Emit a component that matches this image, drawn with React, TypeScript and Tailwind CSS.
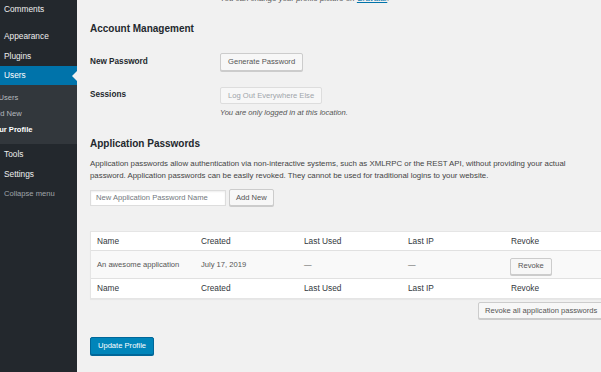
import React from "react";

const menuTop = ["Comments"];
const menuMid = ["Appearance", "Plugins"];
const menuBottom = ["Tools", "Settings"];

function Sidebar() {
  return (
    <div className="flex w-[77px] shrink-0 flex-col bg-[#23282d] text-[8.3px] text-[#eeeeee]">
      {menuTop.map((m) => (
        <div key={m} className="-mt-px flex h-5 items-center pl-[4px]">
          {m}
        </div>
      ))}
      <div className="h-[7px]" />
      {menuMid.map((m) => (
        <div key={m} className="flex h-5 items-center pl-[4px]">
          {m}
        </div>
      ))}
      <div className="relative flex h-[19px] items-center bg-[#0073aa] pl-[4px] text-white">
        Users
        <span className="absolute right-0 top-1/2 h-0 w-0 -translate-y-1/2 border-y-[5px] border-r-[5px] border-y-transparent border-r-[#f1f1f1]" />
      </div>
      <div className="overflow-hidden bg-[#32373c] pb-[6px] pt-[5px] text-[7.6px] text-[#b4b9be]">
        <div className="flex h-4 items-center whitespace-nowrap">
          <span className="ml-[-12px]">All Users</span>
        </div>
        <div className="flex h-4 items-center whitespace-nowrap">
          <span className="ml-[-9px]">Add New</span>
        </div>
        <div className="flex h-4 items-center whitespace-nowrap font-bold text-white">
          <span className="ml-[-10px]">Your Profile</span>
        </div>
      </div>
      {menuBottom.map((m) => (
        <div key={m} className="flex h-5 items-center pl-[4px]">
          {m}
        </div>
      ))}
      <div className="flex h-5 items-center pl-[4px] text-[7.6px] text-[#a0a5aa]">
        Collapse menu
      </div>
    </div>
  );
}

function Button({
  children,
  disabled,
  className = "",
}: {
  children: React.ReactNode;
  disabled?: boolean;
  className?: string;
}) {
  return (
    <span
      className={
        "inline-flex h-[17px] shrink-0 items-center whitespace-nowrap rounded-[2px] border px-[6px] text-[7.6px] " +
        (disabled
          ? "border-[#dddddd] bg-[#f7f7f7] text-[#a0a5aa]"
          : "border-[#cccccc] bg-[#f7f7f7] text-[#555555] shadow-[0_1px_0_#cccccc]") +
        " " +
        className
      }
    >
      {children}
    </span>
  );
}

const cols = ["Name", "Created", "Last Used", "Last IP", "Revoke"];

function Cell({ children, w }: { children: React.ReactNode; w: string }) {
  return <div className={"flex shrink-0 items-center pl-[6px] " + w}>{children}</div>;
}

const widths = ["w-[104px]", "w-[103px]", "w-[104px]", "w-[103px]", "w-[126px]"];

function HeadRow({ className = "" }: { className?: string }) {
  return (
    <div className={"flex text-[8.3px] text-[#32373c] " + className}>
      {cols.map((c, i) => (
        <Cell key={c} w={widths[i]}>
          {c}
        </Cell>
      ))}
    </div>
  );
}

export default function App() {
  return (
    <div className="flex h-[372px] w-[601px] overflow-hidden bg-[#f1f1f1] font-['Liberation_Sans',Arial,sans-serif] text-[#23282d]">
      <Sidebar />
      <div className="min-w-0 flex-1 overflow-hidden pl-[13px]">
        <div className="-mt-[6px] ml-[130px] whitespace-nowrap text-[7.9px] italic leading-[10px] text-[#555555]">
          You can change your profile picture on{" "}
          <span className="text-[#0073aa] underline">Gravatar</span>.
        </div>

        <h2 className="mt-[18px] h-[14px] text-[10px] font-bold leading-[14px]">
          Account Management
        </h2>

        <div className="mt-[17px] flex h-[18px] items-center">
          <div className="w-[130px] shrink-0 text-[8.2px] font-bold">New Password</div>
          <Button className="h-[18px] px-[7px]">Generate Password</Button>
        </div>

        <div className="mt-[16px] flex h-[17px] items-center">
          <div className="w-[130px] shrink-0 text-[8.2px] font-bold">Sessions</div>
          <Button disabled className="px-[7px]">
            Log Out Everywhere Else
          </Button>
        </div>
        <div className="ml-[130px] mt-[4px] text-[7.6px] italic leading-[10px] text-[#555555]">
          You are only logged in at this location.
        </div>

        <h2 className="mt-[19px] h-[14px] text-[10px] font-bold leading-[14px]">
          Application Passwords
        </h2>

        <p className="mt-[7px] w-[500px] text-[7.85px] leading-[12px] text-[#444444]">
          Application passwords allow authentication via non-interactive systems, such as XMLRPC
          or the REST API, without providing your actual password. Application passwords can be
          easily revoked. They cannot be used for traditional logins to your website.
        </p>

        <div className="mt-[7px] flex items-center gap-[3px]">
          <div className="flex h-[16px] w-[136px] items-center border border-[#dddddd] bg-white pl-[5px] text-[7.6px] text-[#72777c] shadow-[inset_0_1px_2px_rgba(0,0,0,0.07)]">
            New Application Password Name
          </div>
          <Button className="h-[16px]">Add New</Button>
        </div>

        <div className="mt-[25px] w-[540px] border border-[#e5e5e5] bg-white shadow-[0_1px_1px_rgba(0,0,0,0.04)]">
          <HeadRow className="h-[19px] border-b border-[#e1e1e1]" />
          <div className="flex h-[27px] bg-[#f9f9f9] text-[7.6px] text-[#555555]">
            <Cell w={widths[0]}>An awesome application</Cell>
            <Cell w={widths[1]}>July 17, 2019</Cell>
            <Cell w={widths[2]}>—</Cell>
            <Cell w={widths[3]}>—</Cell>
            <Cell w={widths[4]}>
              <Button className="ml-[-1px] mt-[3px] h-[16px] px-[7px]">Revoke</Button>
            </Cell>
          </div>
          <HeadRow className="h-[20px] border-t border-[#e1e1e1]" />
        </div>

        <div className="ml-[388px] mt-[3px] flex">
          <Button className="px-[5px]">Revoke all application passwords</Button>
        </div>

        <div className="mt-[18px] flex">
          <span className="inline-flex h-[18px] w-[64px] items-center justify-center rounded-[2px] border border-[#006799] bg-[#0085ba] text-[7.6px] text-white shadow-[0_1px_0_#006799]">
            Update Profile
          </span>
        </div>
      </div>
    </div>
  );
}
